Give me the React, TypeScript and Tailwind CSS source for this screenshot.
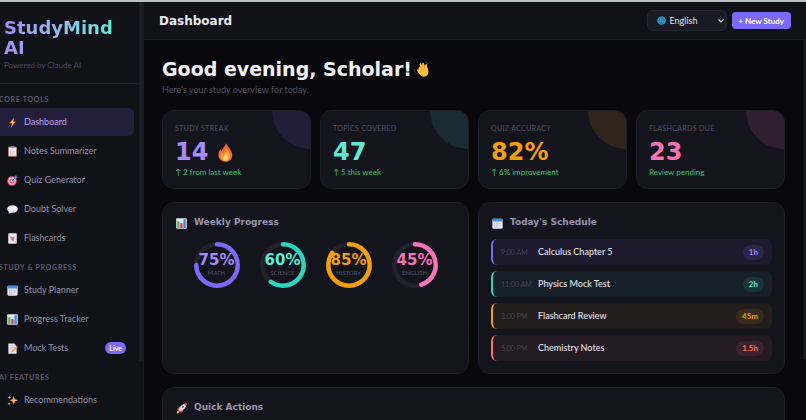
import { useState, type ReactNode } from "react";
import { clsx } from "clsx";

const icons: Record<string, ReactNode> = {
  bolt: (
    <>
      <path d="M10.5 0.5 3.5 9h3.6L5.6 15.5 12.7 6.6H9z" fill="#f98a4b" />
      <path d="M9.2 4 5.4 8.3h3L7.5 12l3.4-4.5H8.2z" fill="#ffc05c" />
    </>
  ),
  notes: (
    <>
      <rect x="1.5" y="1" width="13" height="14.5" rx="1.2" fill="#b98273" />
      <rect x="3" y="2.4" width="10" height="11.8" fill="#f1edf6" />
      <rect x="5.3" y="0.3" width="5.4" height="3" rx="1" fill="#9aa0ad" />
      <path d="M4.8 5.8h6.4M4.8 8h6.4M4.8 10.2h6.4M4.8 12.2h4" stroke="#b8b5c9" strokeWidth="0.8" />
    </>
  ),
  target: (
    <>
      <circle cx="7.3" cy="8.7" r="7" fill="#e0446b" />
      <circle cx="7.3" cy="8.7" r="5.3" fill="#f6dbe6" />
      <circle cx="7.3" cy="8.7" r="3.7" fill="#e0446b" />
      <circle cx="7.3" cy="8.7" r="1.8" fill="#f6dbe6" />
      <path d="M7.3 8.7 12.4 3.6" stroke="#2569a5" strokeWidth="1.2" />
      <path d="m10.4 3.4 2.8-3.3.5 2 2 .5-3 2.8h-2.3z" fill="#3d9be0" />
    </>
  ),
  bubble: (
    <>
      <ellipse cx="8" cy="7.3" rx="7.7" ry="5.6" fill="#eeeaf8" />
      <path d="M3 10.5 2.4 14l4.6-2z" fill="#eeeaf8" />
    </>
  ),
  cards: (
    <>
      <rect x="1.8" y="0.5" width="12.4" height="15" rx="1" fill="#ece8f1" />
      <path d="M5 4.5c2 2 4 0 6 1.2-.6 2.4 0 4-2.4 5.8-2-.2-3.6-2-3.6-4z" fill="#d590a3" />
      <path d="m6 6 1.7 1.5M10 6 8.4 8.2M7 10.2h2.4" stroke="#8a4d73" strokeWidth="0.8" />
      <path d="M3.2 2v2M12.8 12v2" stroke="#d34862" strokeWidth="0.9" />
    </>
  ),
  calendar: (
    <>
      <rect x="0.5" y="1" width="15" height="14.5" rx="1.6" fill="#e9e6f6" />
      <path d="M.5 5V2.6A1.6 1.6 0 0 1 2.1 1h11.8a1.6 1.6 0 0 1 1.6 1.6V5z" fill="#3b8de8" />
      <path d="M3 7.8h10M3 10.3h10M3 12.8h7" stroke="#a5a3c7" strokeWidth="1.2" strokeDasharray="1.5 1" />
    </>
  ),
  chart: (
    <>
      <rect x="0.3" y="0.3" width="15.4" height="15.4" rx="1.4" fill="#e5e8ef" />
      <path d="M.5 5h15M.5 10h15" stroke="#bac5cf" strokeWidth="0.5" />
      <rect x="1.7" y="4.7" width="3.5" height="10" fill="#59b864" />
      <rect x="6.2" y="7.5" width="3.5" height="7.2" fill="#da4464" />
      <rect x="10.8" y="1.8" width="3.5" height="12.9" fill="#438ed5" />
    </>
  ),
  memo: (
    <>
      <path d="M2 .8h8.5L14 4.3v11.2H2z" fill="#e9e6f1" />
      <path d="M10.5.8V4.3H14z" fill="#b7b3c7" />
      <path d="M4 4h4.5M4 6.4h7M4 8.8h4M4 12.8h4" stroke="#aaa6bb" strokeWidth="0.8" />
      <path d="m6.3 13.2.8-2.7 6.2-5.2 1.8 2-6.3 5.3z" fill="#ef9a5c" />
      <path d="m13.3 5.3 1-.8 1.7 1.9-.9.9z" fill="#e0526a" />
    </>
  ),
  sparkles: (
    <>
      <path d="M9.8 1.3 11.4 6l4.4 1.8-4.4 1.8-1.6 5-1.7-5-4.2-1.8L8.1 6z" fill="#ffb743" />
      <path d="m3.4.8.8 2 2 .8-2 .8-.8 2-.8-2-2-.8 2-.8zM3.2 10l.7 1.9 1.8.8-1.8.7-.7 1.9-.7-1.9-1.8-.7 1.8-.8z" fill="#ff9c47" />
    </>
  ),
  rocket: (
    <>
      <path d="M1 15.2c0-3 1.2-4.7 3.6-4.7l1 1.2c0 2.1-1.7 3.5-4.6 3.5z" fill="#f89a48" />
      <path d="M1.5 8.6 5 5.2l3 .4-4 5zM7.6 14.5l3.2-3.5-.4-3-5 4z" fill="#d83c65" />
      <path d="M4 9.8C6 4.3 9.6 1 15.4.6 15 6.4 11.7 10 6.2 12z" fill="#dcdced" />
      <path d="M11.6 1.6C12.8 1 14 .7 15.4.6c-.1 1.4-.4 2.6-1 3.8z" fill="#e34b69" />
      <circle cx="10.2" cy="5.8" r="1.5" fill="#55698e" />
    </>
  ),
  fire: (
    <>
      <path d="M8.2.2c1 2.2 4.8 5 5.4 9.2.5 3.6-2 6.4-5.5 6.4S2 13.4 2 10.2c0-2 .8-3.6 1.6-5l1.2 1.6C5.4 4 7.8 3 8.2.2z" fill="#f2683c" />
      <path d="M9 4.4c.2 2 3 3.3 3 6.3 0 2.6-1.7 4.4-4 4.4s-4.2-1.6-4.2-4c0-1.5.6-2.5 1.2-3.3l1 1.3c1.6-.7 2.6-2.4 3-4.7z" fill="#ff9d3b" />
      <path d="M8.3 9c.6 1.3 1.7 2 1.7 3.6 0 1.2-.8 2-2 2s-2.1-.8-2.1-2c0-1.6 1.7-2.2 2.4-3.6z" fill="#ffd56a" />
    </>
  ),
  wave: (
    <>
      <path
        d="M5.2 5.2c.6-.7 1.3-.4 1.7.2L6 2.6c-.2-1.3 1.5-1.6 2-.4l.8 2V1.6c.2-1.2 1.8-1.1 2 .1l.7 3.1.7-2c.5-1 1.8-.6 1.7.6-.1 2.6 1.6 4.4 1.5 7.2-.1 3-2 5-4.8 5-2.3 0-3.8-1.2-5-3.2L3.2 9.2c-.5-1 .6-1.8 1.5-1z"
        fill="#ffbd3e"
      />
      <path d="m8.8 4.2.8 3M11.5 4.8l.2 2.4M6.9 5.4l1 2.6" stroke="#dd8d26" strokeWidth="0.5" />
      <path d="M.8 7.5c-.3 2 .2 3.5 1.6 4.5M12.3.4c1.2.1 2 .6 2.5 1.6" stroke="#245e7b" strokeWidth="1" fill="none" />
    </>
  ),
  globe: (
    <>
      <circle cx="8" cy="8" r="7.6" fill="#3ba3cf" />
      <path d="M.5 8h15M8 .5v15M2 4h12M2 12h12M8 .5C3 4 3 12 8 15.5 13 12 13 4 8 .5" stroke="#1c6a91" strokeWidth="0.9" fill="none" />
    </>
  ),
};

function Icon({ name, className = "size-[11px]" }: { name: string; className?: string }) {
  return (
    <svg viewBox="0 0 16 16" className={clsx("shrink-0", className)} aria-hidden="true">
      {icons[name]}
    </svg>
  );
}

const display = "font-['DejaVu_Sans',sans-serif] font-bold";

const navSections = [
  {
    label: "Core Tools",
    items: [
      { icon: "bolt", label: "Dashboard" },
      { icon: "notes", label: "Notes Summarizer" },
      { icon: "target", label: "Quiz Generator" },
      { icon: "bubble", label: "Doubt Solver" },
      { icon: "cards", label: "Flashcards" },
    ],
  },
  {
    label: "Study & Progress",
    items: [
      { icon: "calendar", label: "Study Planner" },
      { icon: "chart", label: "Progress Tracker" },
      { icon: "memo", label: "Mock Tests", badge: "Live" },
    ],
  },
  {
    label: "AI Features",
    items: [{ icon: "sparkles", label: "Recommendations" }],
  },
];

const stats = [
  { label: "Study Streak", value: "14", icon: "fire", change: "↑ 2 from last week", text: "text-[#a78bfa]", corner: "bg-[#221e3a]" },
  { label: "Topics Covered", value: "47", change: "↑ 5 this week", text: "text-[#5eead4]", corner: "bg-[#182c31]" },
  { label: "Quiz Accuracy", value: "82%", change: "↑ 6% improvement", text: "text-[#f59e0b]", corner: "bg-[#30251c]" },
  { label: "Flashcards Due", value: "23", change: "Review pending", text: "text-[#f472b6]", corner: "bg-[#301f31]" },
];

const subjects = [
  { name: "Math", percent: 75, stroke: "#7c6af7", text: "text-[#a78bfa]" },
  { name: "Science", percent: 60, stroke: "#2dd4bf", text: "text-[#5eead4]" },
  { name: "History", percent: 85, stroke: "#f59e0b", text: "text-[#f59e0b]" },
  { name: "English", percent: 45, stroke: "#f472b6", text: "text-[#f472b6]" },
];

const schedule = [
  { time: "9:00 AM", title: "Calculus Chapter 5", length: "1h", row: "bg-[#1d1a2d] border-[#7c6af7]", pill: "bg-[#2b2549] text-[#a78bfa]" },
  { time: "11:00 AM", title: "Physics Mock Test", length: "2h", row: "bg-[#172028] border-[#2dd4bf]", pill: "bg-[#193536] text-[#5eead4]" },
  { time: "3:00 PM", title: "Flashcard Review", length: "45m", row: "bg-[#231d1e] border-[#f59e0b]", pill: "bg-[#3a2a1b] text-[#f59e0b]" },
  { time: "5:00 PM", title: "Chemistry Notes", length: "1.5h", row: "bg-[#231a23] border-[#f87171]", pill: "bg-[#3d222b] text-[#f87171]" },
];

function Sidebar() {
  const [active, setActive] = useState("Dashboard");

  return (
    <aside className="flex w-36 shrink-0 border-r border-[#1a1a23] bg-[#111217]">
      <div className="min-w-0 flex-1 overflow-hidden">
        <div className="border-b border-[#1d1d26] px-1 pt-4 pb-3">
          <div className={clsx(display, "w-28 bg-linear-to-r from-[#a78bfa] to-[#5eead4] bg-clip-text text-lg leading-5 text-transparent")}>
            StudyMind AI
          </div>
          <p className="mt-px text-[8px] leading-3 text-[#4b495d]">Powered by Claude AI</p>
        </div>
        <nav className="pt-2">
          {navSections.map((section) => (
            <div key={section.label} className="not-first:mt-2">
              <h2 className="-ml-px pt-[3px] pb-1 text-[7px] leading-[9px] font-bold tracking-widest text-[#5b596d] uppercase">
                {section.label}
              </h2>
              <ul className="mb-2 space-y-px">
                {section.items.map((item) => (
                  <li key={item.label}>
                    <button
                      type="button"
                      onClick={() => setActive(item.label)}
                      className={clsx(
                        "flex h-7 w-[134px] items-center gap-1.5 rounded-r-md pr-2 pl-[7px] text-left text-[9px]",
                        active === item.label ? "bg-[#231f3b] text-[#b9a5fb]" : "text-[#9391ab]"
                      )}
                    >
                      <Icon name={item.icon} />
                      <span className="flex-1">{item.label}</span>
                      {"badge" in item && (
                        <span className="rounded-full bg-[#7c6af7] px-1 text-[7px] leading-3 font-bold text-white">{item.badge}</span>
                      )}
                    </button>
                  </li>
                ))}
              </ul>
            </div>
          ))}
        </nav>
      </div>
      <div className="h-[86%] w-1 bg-[#1c1c27]" />
    </aside>
  );
}

function Header() {
  return (
    <header className="flex h-[38px] shrink-0 items-center justify-between border-b border-[#1a1a23] bg-[#111217] px-[15px]">
      <h1 className={clsx(display, "text-[12px] text-[#e9e8f2]")}>Dashboard</h1>
      <div className="flex items-center gap-[5px]">
        <div className="relative flex items-center">
          <select
            aria-label="Language"
            className="h-[21px] w-20 appearance-none rounded-md border border-[#262631] bg-[#1a1a24] pl-[22px] text-[9px] leading-3 text-[#e4e3ee]"
          >
            <option>English</option>
          </select>
          <Icon name="globe" className="pointer-events-none absolute left-2.5 size-[9px]" />
          <svg viewBox="0 0 6 4" className="pointer-events-none absolute right-[3px] h-1 w-1.5" fill="none" stroke="#e4e3ee" strokeWidth="1.2">
            <path d="M.5.5 3 3 5.5.5" />
          </svg>
        </div>
        <button type="button" className="h-[17px] rounded bg-[#7c6af7] px-[7px] text-[8px] font-bold whitespace-nowrap text-white">
          + New Study
        </button>
      </div>
    </header>
  );
}

function CardTitle({ icon, children }: { icon: string; children: ReactNode }) {
  return (
    <h3 className={clsx(display, "mb-2 flex h-4 items-center gap-[7px] pl-px text-[9px] text-[#9896ad]")}>
      <Icon name={icon} />
      {children}
    </h3>
  );
}

function Ring({ name, percent, stroke, text }: (typeof subjects)[number]) {
  return (
    <div className="relative size-[46px]">
      <svg viewBox="0 0 46 46" className="size-full -rotate-90" fill="none" strokeWidth="4.5">
        <circle cx="23" cy="23" r="20.7" stroke="#22222d" />
        <circle cx="23" cy="23" r="20.7" stroke={stroke} strokeLinecap="round" pathLength={100} strokeDasharray={`${percent} 100`} />
      </svg>
      <div className="absolute inset-0 flex flex-col items-center justify-center">
        <span className={clsx(display, "text-[15px] leading-4", text)}>{percent}%</span>
        <span className="text-[6px] leading-[10px] text-[#55536a] uppercase">{name}</span>
      </div>
    </div>
  );
}

const card = "rounded-xl border border-[#1e1e29] bg-[#14141d]";

export default function App() {
  return (
    <div className="flex h-screen overflow-hidden border-t-2 border-[#b9c0c0] bg-[#09090d] font-['Lato','Liberation_Sans',sans-serif] text-[#e9e8f2]">
      <Sidebar />
      <div className="flex min-w-0 flex-1 flex-col">
        <Header />
        <div className="flex min-h-0 flex-1">
          <main className="min-w-0 flex-1 overflow-hidden px-[18px] pt-[18px]">
            <h2 className={clsx(display, "flex items-center gap-0.5 text-[19px] leading-[22px] text-[#f3f2fa]")}>
              Good evening, Scholar!
              <Icon name="wave" className="size-[15px]" />
            </h2>
            <p className="mt-1 text-[9px] leading-3 text-[#504e62]">Here's your study overview for today.</p>

            <div className="mt-3.5 grid grid-cols-4 gap-[9px]">
              {stats.map((s) => (
                <div key={s.label} className={clsx(card, "relative overflow-hidden px-3 pt-3 pb-[11px]")}>
                  <div className={clsx("absolute top-0 right-0 size-[38px] rounded-bl-full", s.corner)} />
                  <div className="text-[7px] leading-[10px] tracking-wider text-[#514f63] uppercase">{s.label}</div>
                  <div className={clsx(display, "mt-2 flex items-center gap-2 text-2xl leading-[22px]", s.text)}>
                    {s.value}
                    {s.icon && <Icon name={s.icon} className="size-[19px]" />}
                  </div>
                  <div className="mt-1 text-[8px] leading-[10px] text-[#34c472]">{s.change}</div>
                </div>
              ))}
            </div>

            <div className="mt-[13px] grid grid-cols-2 gap-[9px]">
              <section className={clsx(card, "p-3")}>
                <CardTitle icon="chart">Weekly Progress</CardTitle>
                <div className="flex justify-center gap-5 pt-[3px]">
                  {subjects.map((s) => (
                    <Ring key={s.name} {...s} />
                  ))}
                </div>
              </section>

              <section className={clsx(card, "p-3")}>
                <CardTitle icon="calendar">Today's Schedule</CardTitle>
                <ul className="space-y-1.5">
                  {schedule.map((s) => (
                    <li key={s.time} className={clsx("flex h-[26px] items-center rounded-md border-l-2 px-2", s.row)}>
                      <span className="w-[37px] shrink-0 text-[7px] text-[#454358]">{s.time}</span>
                      <span className="flex-1 text-[9px] font-medium text-[#e4e3ee]">{s.title}</span>
                      <span className={clsx("rounded-full px-1.5 text-[8px] leading-[15px] font-bold", s.pill)}>{s.length}</span>
                    </li>
                  ))}
                </ul>
              </section>
            </div>

            <section className={clsx(card, "mt-[13px] p-3")}>
              <CardTitle icon="rocket">Quick Actions</CardTitle>
              <div className="h-16" />
            </section>
          </main>
          <div className="h-[84%] w-[3px] bg-[#17171f]" />
        </div>
      </div>
    </div>
  );
}
